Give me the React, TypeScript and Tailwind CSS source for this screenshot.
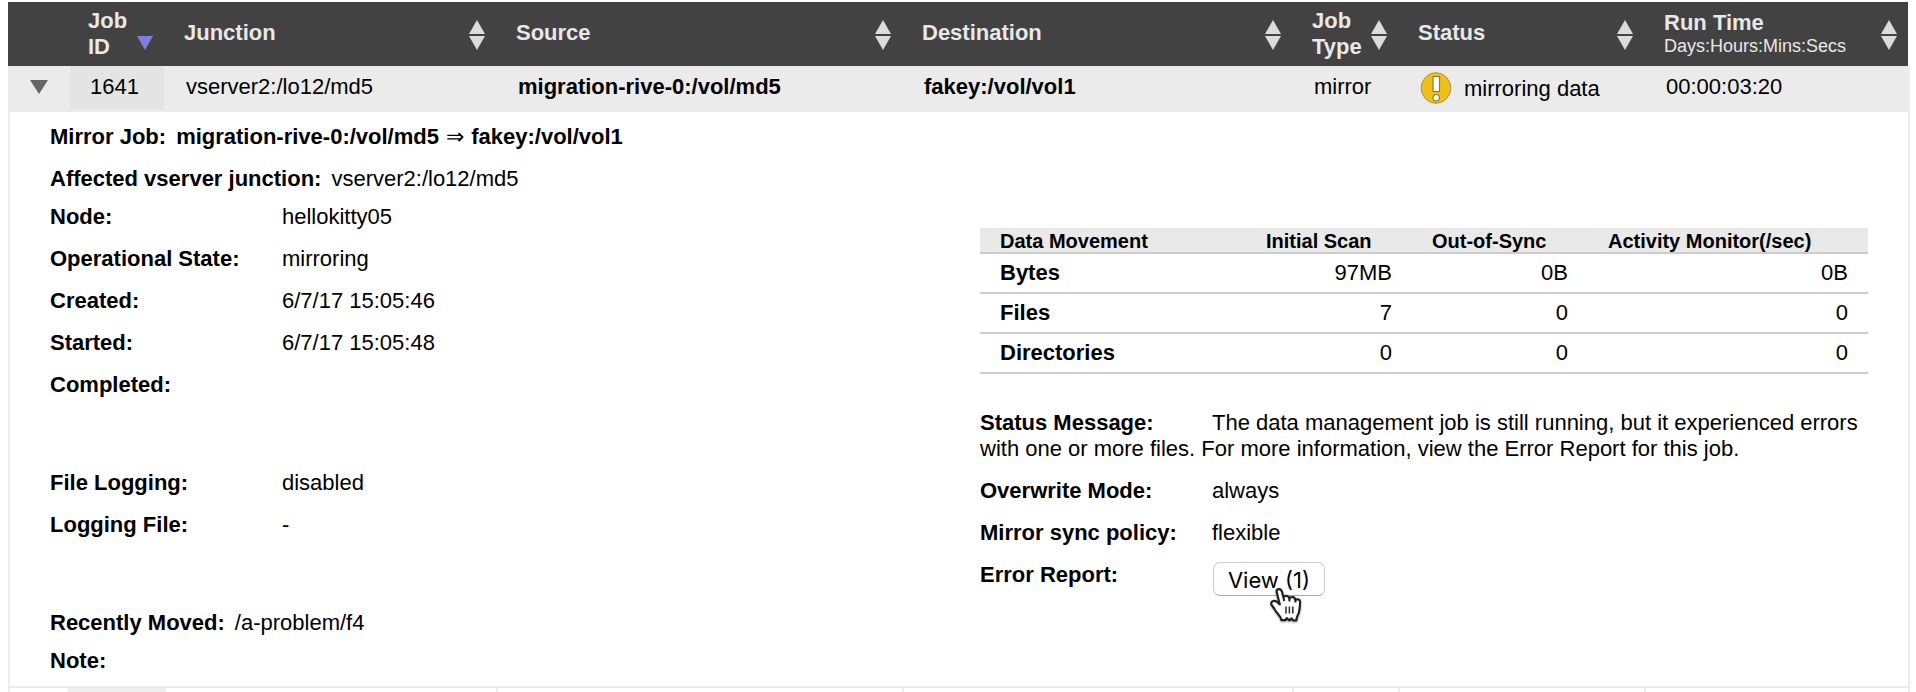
import React from 'react';

function Sort({ desc = false }: { desc?: boolean }) {
  return (
    <svg width="18" height="32" viewBox="0 0 18 32" className="mt-[17px] shrink-0">
      {desc ? (
        <polygon points="1,17 17,17 9,31" fill="#7b7fe2" />
      ) : (
        <>
          <polygon points="9,1 17,15 1,15" fill="#dcdcdc" />
          <polygon points="1,17 17,17 9,31" fill="#dcdcdc" />
        </>
      )}
    </svg>
  );
}

function Head({ w, children, desc = false }: { w: string; children: React.ReactNode; desc?: boolean }) {
  return (
    <div className={`flex shrink-0 justify-between ${w}`}>
      <div className="whitespace-nowrap">{children}</div>
      <Sort desc={desc} />
    </div>
  );
}

function Line({ label, value, children }: { label: string; value?: string; children?: React.ReactNode }) {
  return (
    <div className="flex h-[42px]">
      <div className="w-[232px] shrink-0 font-bold">{label}</div>
      <div>{value}{children}</div>
    </div>
  );
}

function Movement({ name, values }: { name: string; values: string[] }) {
  return (
    <div className="grid h-[40px] grid-cols-[236px_156px_176px_280px] border-b-2 border-[#cccccc] pl-5 pt-[6px]">
      <div className="font-bold">{name}</div>
      {values.map((v, i) => (
        <div key={i} className="text-right">{v}</div>
      ))}
    </div>
  );
}

function Warning() {
  return (
    <svg width="32" height="32" viewBox="0 0 32 32" className="-mt-[4px] shrink-0">
      <ellipse cx="16" cy="16" rx="14.8" ry="15.3" fill="#f1c018" stroke="#a8904a" strokeWidth="1" />
      <rect x="13" y="4.5" width="6.5" height="15" fill="#fff" stroke="#8f7a35" strokeWidth="1.2" />
      <circle cx="16.2" cy="25.7" r="3.2" fill="#fff" stroke="#8f7a35" strokeWidth="1.2" />
    </svg>
  );
}

function Hand() {
  return (
    <svg width="34" height="38" viewBox="0 0 34 38" className="absolute left-[56px] top-[25px] drop-shadow-[0_1px_1px_rgba(0,0,0,0.35)]">
      <path
        d="M9 1.2C7 1.2 6.3 2.6 6.8 4.5L9.8 16.5C8.2 14.6 5.6 12.3 3.2 13C0.8 13.8 0.8 16 2.2 17.8C4.6 20.8 5.4 23 7.6 25.6C9.4 27.6 11 28.8 11.4 32.2H15.2L16.8 30.2L19.4 32.4L21.6 30.4L23 32.4H26.4C26.2 28.8 28.4 26.8 29 24C29.8 20.6 30.2 18 30 13.4C29.8 11 26.4 10.6 25.4 12.4C25.2 8.6 21.2 8 19.4 10.6C18.8 7.4 15 7 13.4 9.2L12 3.8C11.4 2 10.6 1.2 9 1.2Z"
        fill="#fff"
        stroke="#222"
        strokeWidth="2.2"
        strokeLinejoin="round"
      />
      <path d="M13.4 9.2L14.2 13M19.4 10.6V13.6M25.4 12.4V14.6" stroke="#222" strokeWidth="2" fill="none" />
      <path d="M16 18.5V25.5M19.4 18.5V25.5M22.8 18.5V25.5" stroke="#333" strokeWidth="1.6" fill="none" />
    </svg>
  );
}

export default function App() {
  return (
    <div className="h-[692px] w-[1916px] overflow-hidden bg-white pl-2 pt-[2px] font-['Liberation_Sans',Arial,sans-serif] text-[22px] leading-[26px] text-black">
      <div className="flex h-16 w-[1900px] bg-[#424242] pl-[80px] font-bold text-[#e8e8e8]">
        <Head w="w-[96px] pr-[30px]" desc><div className="mt-[6px]">Job<br />ID</div></Head>
        <Head w="w-[332px] pr-[30px]"><div className="mt-[18px]">Junction</div></Head>
        <Head w="w-[406px] pr-[30px]"><div className="mt-[18px]">Source</div></Head>
        <Head w="w-[390px] pr-[30px]"><div className="mt-[18px]">Destination</div></Head>
        <Head w="w-[106px] pr-[30px]"><div className="mt-[6px]">Job<br />Type</div></Head>
        <Head w="w-[246px] pr-[30px]"><div className="mt-[18px]">Status</div></Head>
        <Head w="w-[244px] pr-[10px]">
          <div className="mt-2">Run Time</div>
          <div className="-mt-px text-[18px] font-normal leading-[22px]">Days:Hours:Mins:Secs</div>
        </Head>
      </div>

      <div className="flex h-[46px] w-[1902px] bg-[#ebebeb]">
        <div className="w-[62px] pl-[22px] pt-[14px]">
          <svg width="18" height="14" viewBox="0 0 18 14"><polygon points="0,0 18,0 9,14" fill="#666" /></svg>
        </div>
        <div className="h-[44px] w-[94px] bg-[#e4e4e4] pl-5 pt-2">1641</div>
        <div className="w-[354px] pl-[22px] pt-2">vserver2:/lo12/md5</div>
        <div className="w-[406px] pt-2 font-bold">migration-rive-0:/vol/md5</div>
        <div className="w-[390px] pt-2 font-bold">fakey:/vol/vol1</div>
        <div className="w-[106px] pt-2">mirror</div>
        <div className="flex w-[246px] gap-[12px] pt-[10px]">
          <Warning />
          <span>mirroring data</span>
        </div>
        <div className="pt-2">00:00:03:20</div>
      </div>

      <div className="flex h-[576px] w-[1902px] border-x-2 border-b-2 border-[#ebebeb] pl-10">
        <div className="w-[930px] pt-3">
          <div className="flex h-[42px] gap-[10px] font-bold">
            <span>Mirror Job:</span>
            <span>migration-rive-0:/vol/md5 <span className="ml-px mr-px font-normal">⇒</span> fakey:/vol/vol1</span>
          </div>
          <div className="flex h-[38px] gap-[10px]">
            <span className="font-bold">Affected vserver junction:</span>
            <span>vserver2:/lo12/md5</span>
          </div>
          <Line label="Node:" value="hellokitty05" />
          <Line label="Operational State:" value="mirroring" />
          <Line label="Created:" value="6/7/17 15:05:46" />
          <Line label="Started:" value="6/7/17 15:05:48" />
          <Line label="Completed:" />
          <div className="h-14" />
          <Line label="File Logging:" value="disabled" />
          <Line label="Logging File:" value="-" />
          <div className="h-14" />
          <div className="flex h-[38px] gap-[10px]">
            <span className="font-bold">Recently Moved:</span>
            <span>/a-problem/f4</span>
          </div>
          <div className="font-bold">Note:</div>
        </div>

        <div className="w-[888px] pt-[116px]">
          <div className="grid h-[26px] grid-cols-[266px_166px_176px_1fr] border-b-2 border-[#cccccc] bg-[#e9e9e9] pl-5 pt-px text-[20px] font-bold leading-6">
            <div>Data Movement</div>
            <div>Initial Scan</div>
            <div>Out-of-Sync</div>
            <div>Activity Monitor(/sec)</div>
          </div>
          <Movement name="Bytes" values={['97MB', '0B', '0B']} />
          <Movement name="Files" values={['7', '0', '0']} />
          <Movement name="Directories" values={['0', '0', '0']} />

          <div className="mt-9 h-[68px] whitespace-nowrap">
            <div className="flex">
              <div className="w-[232px] shrink-0 font-bold">Status Message:</div>
              <div>The data management job is still running, but it experienced errors</div>
            </div>
            <div>with one or more files. For more information, view the Error Report for this job.</div>
          </div>
          <Line label="Overwrite Mode:" value="always" />
          <Line label="Mirror sync policy:" value="flexible" />
          <Line label="Error Report:">
            <button className="relative ml-px flex h-[34px] w-[112px] justify-center rounded-[7px] border border-[#cccccc] border-b-[#ababab] pt-[4px] font-['Inter',sans-serif] text-[22px] leading-[26px]">
              View (1)
              <Hand />
            </button>
          </Line>
        </div>
      </div>

      <div className="flex h-1 w-[1902px] border-x-2 border-[#ebebeb]">
        <div className="ml-[58px] w-[98px] bg-[#eeeeee]" />
        <div className="w-[332px] border-r-2 border-[#ebebeb]" />
        <div className="w-[406px] border-r-2 border-[#ebebeb]" />
        <div className="w-[390px] border-r-2 border-[#ebebeb]" />
        <div className="w-[106px] border-r-2 border-[#ebebeb]" />
        <div className="w-[246px] border-r-2 border-[#ebebeb]" />
      </div>
    </div>
  );
}
